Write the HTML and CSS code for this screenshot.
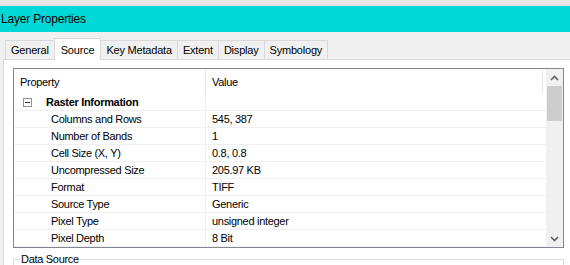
FILE: index.html
```html
<!DOCTYPE html>
<html>
<head>
<meta charset="utf-8">
<link rel="stylesheet" href="styles.css">
</head>
<body>
<div class="window">
  <div class="topstrip"></div>
  <div class="titlebar">Layer Properties</div>
  <div class="tabs">
    <div class="tab">General</div>
    <div class="tab selected">Source</div>
    <div class="tab">Key Metadata</div>
    <div class="tab">Extent</div>
    <div class="tab">Display</div>
    <div class="tab">Symbology</div>
  </div>
  <div class="pane">
    <div class="grid">
      <div class="list">
        <div class="row header">
          <div class="cell c1">Property</div>
          <div class="cell c2">Value</div>
        </div>
        <div class="row group">
          <div class="cell c1"><span class="toggle"></span><b>Raster Information</b></div>
          <div class="cell c2 blank"></div>
        </div>
        <div class="row"><div class="cell c1 child">Columns and Rows</div><div class="cell c2">545, 387</div></div>
        <div class="row"><div class="cell c1 child">Number of Bands</div><div class="cell c2">1</div></div>
        <div class="row"><div class="cell c1 child">Cell Size (X, Y)</div><div class="cell c2">0.8, 0.8</div></div>
        <div class="row"><div class="cell c1 child">Uncompressed Size</div><div class="cell c2">205.97 KB</div></div>
        <div class="row"><div class="cell c1 child">Format</div><div class="cell c2">TIFF</div></div>
        <div class="row"><div class="cell c1 child">Source Type</div><div class="cell c2">Generic</div></div>
        <div class="row"><div class="cell c1 child">Pixel Type</div><div class="cell c2">unsigned integer</div></div>
        <div class="row"><div class="cell c1 child">Pixel Depth</div><div class="cell c2">8 Bit</div></div>
      </div>
      <div class="scrollbar">
        <div class="arrow"><svg width="9" height="6" viewBox="0 0 9 6"><polyline points="1,5 4.5,1.5 8,5" fill="none" stroke="#606060" stroke-width="1.6"/></svg></div>
        <div class="thumb"></div>
        <div class="track"></div>
        <div class="arrow"><svg width="9" height="6" viewBox="0 0 9 6"><polyline points="1,1 4.5,4.5 8,1" fill="none" stroke="#606060" stroke-width="1.6"/></svg></div>
      </div>
    </div>
    <fieldset class="groupbox">
      <legend>Data Source</legend>
    </fieldset>
  </div>
</div>
</body>
</html>
```

FILE: styles.css
```css
html, body {
  margin: 0;
  padding: 0;
}
body {
  width: 570px;
  height: 265px;
  overflow: hidden;
  background: #f0f0f0;
  font-family: "Liberation Sans", Arial, sans-serif;
  font-size: 11px;
  letter-spacing: -0.3px;
  color: #000;
}
.window {
  display: flex;
  flex-direction: column;
  height: 265px;
  overflow: hidden;
}
.topstrip {
  flex-shrink: 0;
  height: 6px;
  background: linear-gradient(#ececec, #e0e0e0);
}
.titlebar {
  flex-shrink: 0;
  height: 26px;
  line-height: 27px;
  background: #00d8d8;
  padding-left: 1px;
  font-size: 12px;
  letter-spacing: -0.2px;
  color: #000;
}
.tabs {
  flex-shrink: 0;
  display: flex;
  align-items: flex-end;
  height: 27px;
  padding-left: 5px;
  box-sizing: border-box;
}
.tab {
  height: 19px;
  line-height: 19px;
  box-sizing: border-box;
  border: 1px solid #d9d9d9;
  border-bottom: none;
  background: #f0f0f0;
  padding: 0 5px;
  margin-right: -1px;
  letter-spacing: -0.2px;
}
.tab.selected {
  height: 22px;
  line-height: 22px;
  background: #fff;
  margin-bottom: -1px;
  position: relative;
  z-index: 1;
  padding: 0 6px;
}
.pane {
  flex: 1 0 auto;
  background: #fff;
  border-top: 1px solid #d9d9d9;
  border-left: 1px solid #d9d9d9;
  margin-left: 3px;
  padding: 8px 0 0 9px;
}
.grid {
  display: flex;
  width: 551px;
  box-sizing: border-box;
  border: 1px solid #828790;
}
.list {
  width: 532px;
}
.row {
  display: grid;
  grid-template-columns: 191px 1fr;
  height: 17px;
  box-sizing: border-box;
  border-bottom: 1px solid #f0f0f0;
}
.cell {
  line-height: 17px;
  white-space: nowrap;
  overflow: hidden;
}
.c1 {
  padding-left: 6px;
}
.c2 {
  border-left: 1px solid #f0f0f0;
  padding-left: 6px;
}
.row.header {
  height: 25px;
  border-bottom: none;
  margin-right: 3px;
  border-right: 1px solid #e5e5e5;
}
.header .cell {
  line-height: 26px;
}
.header .c2 {
  border-left-color: #e5e5e5;
}
.child {
  padding-left: 37px;
}
.group .c1 {
  display: flex;
  align-items: center;
  padding-left: 9px;
}
.toggle {
  position: relative;
  width: 9px;
  height: 9px;
  box-sizing: border-box;
  border: 1px solid #919191;
  margin-right: 14px;
}
.toggle::after {
  content: "";
  position: absolute;
  left: 1px;
  top: 3px;
  width: 5px;
  height: 1px;
  background: #333;
}
.scrollbar {
  width: 17px;
  background: #f0f0f0;
  display: flex;
  flex-direction: column;
}
.arrow {
  height: 17px;
  display: flex;
  align-items: center;
  justify-content: center;
}
.thumb {
  height: 35px;
  margin: 0 1px;
  background: #cdcdcd;
}
.track {
  flex: 1;
}
.groupbox {
  margin: 5px 0 0 0;
  width: 551px;
  box-sizing: border-box;
  border: 1px solid #dcdcdc;
  padding: 0 0 0 6px;
  height: 30px;
}
.groupbox legend {
  padding: 0 1px;
  font-size: 11px;
}
```
